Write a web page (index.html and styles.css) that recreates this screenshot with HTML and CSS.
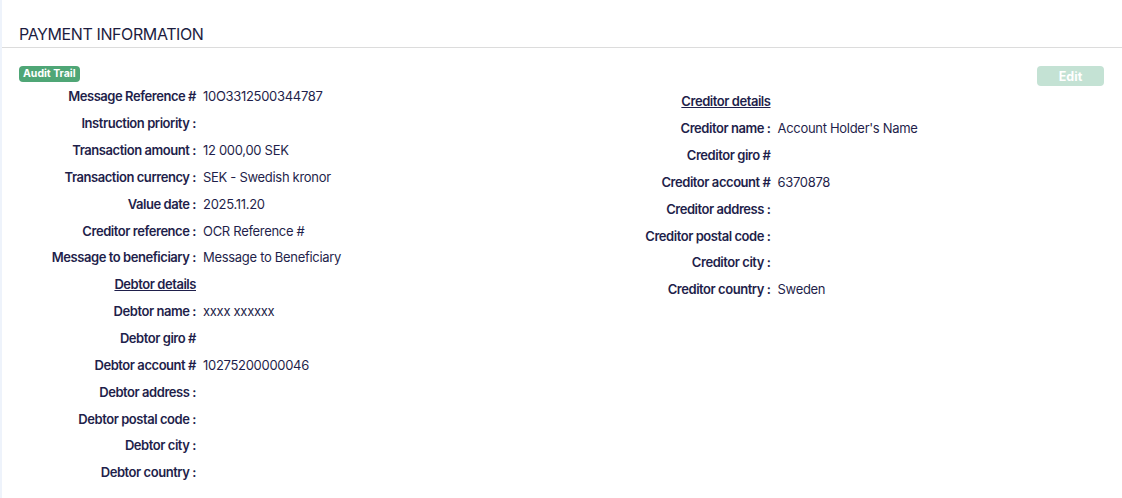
FILE: index.html
```html
<!DOCTYPE html>
<html lang="en">
<head>
    <meta charset="UTF-8">
    <meta name="viewport" content="width=device-width, initial-scale=1.0">
    <title>Payment Information</title>
    <link rel="stylesheet" href="styles.css">
</head>
<body>
    <div class="panel">
        <div class="panel-header">
            <h3>PAYMENT INFORMATION</h3>
        </div>

        <div class="panel-body">
            <!-- Left column: payment + debtor -->
            <div class="col col-left">
                <div class="col-top">
                    <span class="badge">Audit Trail</span>
                </div>
                <div class="details">
                    <div class="row"><span class="label">Message Reference #</span><span class="value">10O3312500344787</span></div>
                    <div class="row"><span class="label">Instruction priority :</span><span class="value"></span></div>
                    <div class="row"><span class="label">Transaction amount :</span><span class="value">12 000,00 SEK</span></div>
                    <div class="row"><span class="label">Transaction currency :</span><span class="value">SEK - Swedish kronor</span></div>
                    <div class="row"><span class="label">Value date :</span><span class="value">2025.11.20</span></div>
                    <div class="row"><span class="label">Creditor reference :</span><span class="value">OCR Reference #</span></div>
                    <div class="row"><span class="label">Message to beneficiary :</span><span class="value">Message to Beneficiary</span></div>
                    <div class="row"><span class="label section">Debtor details</span><span class="value"></span></div>
                    <div class="row"><span class="label">Debtor name :</span><span class="value">xxxx xxxxxx</span></div>
                    <div class="row"><span class="label">Debtor giro #</span><span class="value"></span></div>
                    <div class="row"><span class="label">Debtor account #</span><span class="value">10275200000046</span></div>
                    <div class="row"><span class="label">Debtor address :</span><span class="value"></span></div>
                    <div class="row"><span class="label">Debtor postal code :</span><span class="value"></span></div>
                    <div class="row"><span class="label">Debtor city :</span><span class="value"></span></div>
                    <div class="row"><span class="label">Debtor country :</span><span class="value"></span></div>
                </div>
            </div>

            <!-- Right column: creditor -->
            <div class="col col-right">
                <div class="col-top">
                    <button class="edit-btn" disabled>Edit</button>
                </div>
                <div class="details">
                    <div class="row"><span class="label section">Creditor details</span><span class="value"></span></div>
                    <div class="row"><span class="label">Creditor name :</span><span class="value">Account Holder's Name</span></div>
                    <div class="row"><span class="label">Creditor giro #</span><span class="value"></span></div>
                    <div class="row"><span class="label">Creditor account #</span><span class="value">6370878</span></div>
                    <div class="row"><span class="label">Creditor address :</span><span class="value"></span></div>
                    <div class="row"><span class="label">Creditor postal code :</span><span class="value"></span></div>
                    <div class="row"><span class="label">Creditor city :</span><span class="value"></span></div>
                    <div class="row"><span class="label">Creditor country :</span><span class="value">Sweden</span></div>
                </div>
            </div>
        </div>
    </div>
</body>
</html>
```

FILE: styles.css
```css
* {
    margin: 0;
    padding: 0;
    box-sizing: border-box;
    font-family: 'Inter', sans-serif;
}

body {
    background: #fff;
    color: #1f1f4b;
    border-left: 2px solid #eef3fb;
    min-height: 100vh;
}

.panel-header {
    padding: 26px 17px 4px;
    border-bottom: 1px solid #dcdcdc;
}

.panel-header h3 {
    font-size: 16px;
    font-weight: 400;
    letter-spacing: -0.4px;
    color: #1d1d3f;
    line-height: 17px;
}

.panel-body {
    display: flex;
    padding: 18px 18px 0 17px;
}

.col {
    flex: 1;
}

.col-top {
    display: flex;
    height: 16px;
}

.col-right .col-top {
    justify-content: flex-end;
    height: 20px;
}

.badge {
    background: #4fa676;
    color: #fff;
    font-size: 10.5px;
    font-weight: 700;
    line-height: 16px;
    padding: 0 4px;
    border-radius: 4px;
}

.edit-btn {
    width: 67px;
    height: 20px;
    background: #c4e2d4;
    color: #fff;
    border: none;
    border-radius: 4px;
    font-size: 12.5px;
    font-weight: 700;
}

.details {
    padding-top: 1px;
}

.col-right .details {
    padding-top: 2px;
}

.row {
    display: flex;
    height: 26.85px;
    align-items: center;
    font-size: 13px;
    letter-spacing: -0.3px;
}

.label {
    font-weight: 600;
    letter-spacing: -0.45px;
    text-align: right;
    white-space: nowrap;
}

.col-left .label {
    width: 177px;
}

.col-right .label {
    width: 209px;
}

.label.section {
    text-decoration: underline;
}

.value {
    padding-left: 7px;
    white-space: nowrap;
}
```
